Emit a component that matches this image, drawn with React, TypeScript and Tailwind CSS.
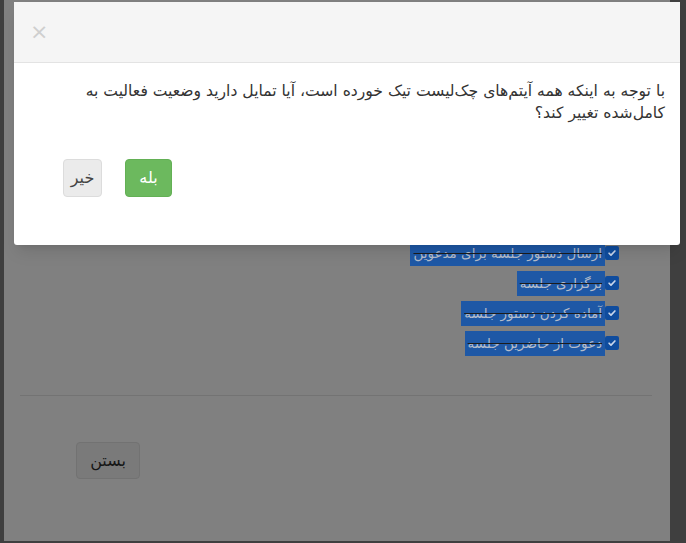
import React from "react"

const font = { fontFamily: '"DejaVu Sans", "Noto Sans", sans-serif' }

const items = [
  "ارسال دستور جلسه برای مدعوین",
  "برگزاری جلسه",
  "آماده کردن دستور جلسه",
  "دعوت از حاضرین جلسه",
]

function CheckedBox() {
  return (
    <span className="flex h-[14px] w-[14px] shrink-0 items-center justify-center rounded-[2px] bg-[#0f4c9e]">
      <svg viewBox="0 0 12 12" className="h-[10px] w-[10px]" fill="none" stroke="#c9d5ea" strokeWidth={2} strokeLinecap="round" strokeLinejoin="round">
        <path d="M2.5 6.3l2.3 2.3 4.7-5" />
      </svg>
    </span>
  )
}

export default function App() {
  return (
    <div className="relative h-[543px] w-[686px] overflow-hidden bg-[#3f3f3f]" style={font}>
      {/* underlying modal, dimmed */}
      <div className="absolute bottom-[2px] left-[4px] top-0 flex w-[666px] flex-col bg-[#808080]">
        <div className="h-[238px]" />
        <ul dir="rtl" className="flex flex-col pr-[51px]">
          {items.map((t) => (
            <li key={t} className="flex h-[30px] items-center">
              <CheckedBox />
              <span className="flex h-[25px] items-center bg-[#1e58a6] px-[3px] text-[13.5px] text-[#b3bccb] line-through decoration-[#1c1c1c]">
                {t}
              </span>
            </li>
          ))}
        </ul>
        <div className="ml-[16px] mr-[18px] mt-[37px] border-t border-[#737373]" />
        <div className="pl-[72px] pt-[46px]">
          <button className="h-[37px] w-[64px] rounded-[4px] border border-[#727272] bg-[#7a7a7a] text-[16px] text-[#161616]">
            بستن
          </button>
        </div>
      </div>

      {/* confirm modal */}
      <div className="absolute left-[14px] top-[2px] flex h-[243px] w-[666px] flex-col rounded-[3px] bg-white shadow-lg">
        <div className="flex h-[61px] items-center border-b border-[#e3e3e3] bg-[#f5f5f5] px-[16px]">
          <span className="text-[22px] leading-none text-[#cfcfcf]">×</span>
        </div>
        <div dir="rtl" className="px-[15px] pt-[17px] text-[15.6px] leading-[22px] text-[#333]">
          <p>
            با توجه به اینکه همه آیتم‌های چک‌لیست تیک خورده است، آیا تمایل دارید وضعیت فعالیت به
            <br />
            کامل‌شده تغییر کند؟
          </p>
        </div>
        <div className="flex gap-[23px] pl-[49px] pt-[35px]">
          <button className="h-[38px] w-[39px] rounded-[4px] border border-[#dcdcdc] bg-[#ebebeb] text-[16px] text-[#444]">
            خیر
          </button>
          <button className="h-[38px] w-[47px] rounded-[4px] border border-[#63b055] bg-[#6cb95e] text-[16px] font-medium text-white">
            بله
          </button>
        </div>
      </div>
    </div>
  )
}
